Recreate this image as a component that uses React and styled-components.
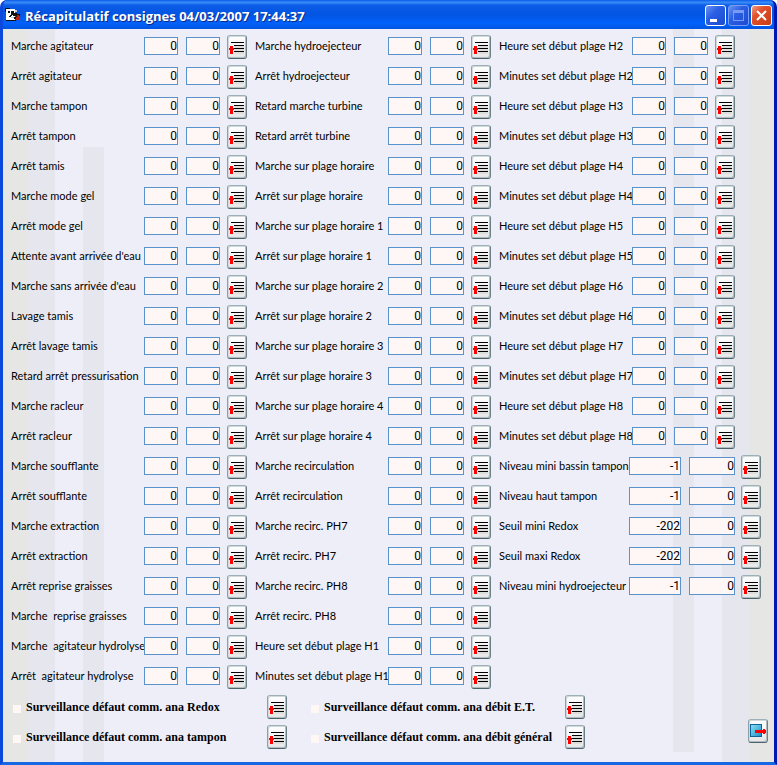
import React, { useState } from "react";
import styled, { createGlobalStyle } from "styled-components";

const GlobalStyle = createGlobalStyle`
* { box-sizing: border-box; }
html, body, #root { height: 100%; }
body {
    margin: 0;
    background: #fff;
    font-family: Lato, "Liberation Sans", sans-serif;
    font-size: 11px;
    color: #000;
}
`;

const Window = styled.div`
    display: flex;
    flex-direction: column;
    min-height: 100%;
    border: solid;
    border-width: 0 3px 3px;
    border-color: #0a49dc #0019b0 #1868e4 #0a49dc;
    border-radius: 7px 7px 0 0;
    background: #0a49dc;
    overflow: hidden;
`;

const TitleBar = styled.header`
    display: flex;
    align-items: center;
    gap: 4px;
    height: 29px;
    padding: 2px 2px 0;
    background: linear-gradient(#0a5be8 0%, #3a8cf8 8%, #0c5ce6 18%, #0254e3 50%, #0262fb 80%, #0054e0 100%);
`;

const Title = styled.h1`
    flex: 1;
    margin: 0;
    color: #fff;
    font-family: "Open Sans", "Noto Sans", sans-serif;
    font-size: 13px;
    font-weight: 700;
    line-height: 20px;
    text-shadow: 1px 1px 0 #0a2a8c;
    white-space: nowrap;
`;

const TitleButtons = styled.div`
    display: flex;
    gap: 2px;
`;

const TitleButton = styled.button`
    width: 21px;
    height: 21px;
    padding: 0;
    border: 1px solid ${(p) => (p.disabled ? "#7a9cf0" : "#fff")};
    border-radius: 3px;
    background: ${(p) => (p.$close ? "linear-gradient(135deg, #f0a088, #e0502c 35%, #c83c14)" : "linear-gradient(135deg, #6c94f4, #2a5ee4 40%, #1c4cd0)")};

    svg { display: block; }
`;

const Body = styled.main`
    flex: 1;
    display: flex;
    flex-direction: column;
    gap: 6px;
    padding: 6px 13px 13px 8px;
    background:
        linear-gradient(#e6e6ef, #e6e6ef) 80px 118px / 21px 100% no-repeat,
        linear-gradient(#e6e6ef, #e6e6ef) right 80px bottom 10px / 21px 100% no-repeat,
        linear-gradient(#e6e7e5, #e6e7e5) right / 24px 100% no-repeat,
        linear-gradient(#e6e6ef, #e6e6ef) right / 52px 100% no-repeat,
        linear-gradient(#e6e7e5, #e6e7e5) left / 25px 100% no-repeat,
        linear-gradient(#e6e6ef, #e6e6ef) left / 52px 100% no-repeat,
        #eeeef8;
`;

const Columns = styled.div`
    display: grid;
    grid-template-columns: minmax(0, 236fr) minmax(0, 236fr) minmax(0, 262fr);
    gap: 8px;
`;

const Column = styled.div`
    display: flex;
    flex-direction: column;
    gap: 6px;
`;

const Row = styled.div`
    display: flex;
    align-items: flex-start;
    height: 24px;
    padding-right: ${(p) => (p.$indent ? "26px" : "0")};
`;

const Label = styled.label`
    flex: 1;
    min-width: 0;
    line-height: 22px;
    white-space: pre;
`;

const Field = styled.input`
    flex: none;
    width: ${(p) => p.$width}px;
    height: 18px;
    margin: 2px 8px 0 0;
    padding: 0;
    border: 1px solid #5a92cc;
    border-radius: 0;
    background: #fff6f6;
    color: #000;
    font-family: Roboto, "Liberation Sans", sans-serif;
    font-size: 12px;
    line-height: 16px;
    text-align: right;
`;

const LastField = styled(Field)`
    margin-right: ${(p) => (p.$width > 34 ? "6px" : "7px")};
`;

const IconButton = styled.button`
    flex: none;
    width: 20px;
    height: 24px;
    padding: 0;
    border: 1px solid;
    border-color: #9cb0b8 #6c8088 #4c626c #8ca0a8;
    border-radius: 3px;
    background: linear-gradient(#fff, #f4f2f6 50%, #e4e6e4);
    box-shadow: inset -1px -1px 0 #b0bcc0, inset 1px 1px 0 #d0dadc;

    svg { display: block; }
`;

const Footer = styled.div`
    display: flex;
    align-items: flex-end;
    justify-content: space-between;
    margin-right: -7px;
`;

const Alarms = styled.div`
    display: grid;
    grid-template-columns: 276px 276px;
    gap: 6px 22px;
`;

const Alarm = styled.div`
    display: flex;
    align-items: center;
    height: 24px;
`;

const Check = styled.input`
    appearance: none;
    width: 8px;
    height: 8px;
    margin: 4px 5px 0 2px;
    background: #fff6f6;

    &:checked { background: #5a92cc; }
`;

const AlarmLabel = styled.label`
    flex: 1;
    font-family: "Liberation Serif", serif;
    font-size: 12px;
    font-weight: 700;
    line-height: 24px;
    white-space: nowrap;
`;

const QuitButton = styled(IconButton)`
    margin-bottom: 6px;
`;

const leftRows = [
    "Marche agitateur", "Arrêt agitateur", "Marche tampon", "Arrêt tampon",
    "Arrêt tamis", "Marche mode gel", "Arrêt mode gel",
    "Attente avant arrivée d'eau", "Marche sans arrivée d'eau",
    "Lavage tamis", "Arrêt lavage tamis", "Retard arrêt pressurisation",
    "Marche racleur", "Arrêt racleur", "Marche soufflante", "Arrêt soufflante",
    "Marche extraction", "Arrêt extraction", "Arrêt reprise graisses",
    "Marche  reprise graisses", "Marche  agitateur hydrolyse", "Arrêt  agitateur hydrolyse",
].map((label) => ({ label }));

const middleRows = [
    "Marche hydroejecteur", "Arrêt hydroejecteur", "Retard marche turbine", "Retard arrêt turbine",
    "Marche sur plage horaire", "Arrêt sur plage horaire",
    "Marche sur plage horaire 1", "Arrêt sur plage horaire 1",
    "Marche sur plage horaire 2", "Arrêt sur plage horaire 2",
    "Marche sur plage horaire 3", "Arrêt sur plage horaire 3",
    "Marche sur plage horaire 4", "Arrêt sur plage horaire 4",
    "Marche recirculation", "Arrêt recirculation",
    "Marche recirc. PH7", "Arrêt recirc. PH7", "Marche recirc. PH8", "Arrêt recirc. PH8",
    "Heure set début plage H1", "Minutes set début plage H1",
].map((label) => ({ label }));

const rightRows = [
    ...[2, 3, 4, 5, 6, 7, 8].flatMap((n) => [
        { label: `Heure set début plage H${n}`, indent: true },
        { label: `Minutes set début plage H${n}`, indent: true },
    ]),
    { label: "Niveau mini bassin tampon", value: "-1", wide: true },
    { label: "Niveau haut tampon", value: "-1", wide: true },
    { label: "Seuil mini Redox", value: "-202", wide: true },
    { label: "Seuil maxi Redox", value: "-202", wide: true },
    { label: "Niveau mini hydroejecteur", value: "-1", wide: true },
];

const columns = [leftRows, middleRows, rightRows];

const alarms = [
    "Surveillance défaut comm. ana Redox",
    "Surveillance défaut comm. ana débit E.T.",
    "Surveillance défaut comm. ana tampon",
    "Surveillance défaut comm. ana débit général",
];

const ListIcon = () => (
    <svg width="18" height="22" viewBox="0 0 18 22" shapeRendering="crispEdges">
        <path d="M7 10h9v8H7z" fill="#dcdedc" />
        <path d="M3 6h13v1H3zM6 9h10v1H6zM6 12h10v1H6zM6 15h10v1H6z" fill="#000" />
        <path d="M2 10h3v2h1v2H5v4H2v-4H1v-2h1z" fill="#f00" />
    </svg>
);

const ExitIcon = () => (
    <svg width="18" height="22" viewBox="0 0 18 22" shapeRendering="crispEdges">
        <defs>
            <linearGradient id="door" x1="0" y1="0" x2="1" y2="1">
                <stop offset="0" stopColor="#8ce4f8" />
                <stop offset="1" stopColor="#1c8cc4" />
            </linearGradient>
        </defs>
        <path d="M1.5 4.5h11v12h-11z" fill="url(#door)" stroke="#0c6498" />
        <path d="M6 10h8V9h2v1h1v3h-1v1h-2v-1H6z" fill="#f00" />
    </svg>
);

const AppIcon = () => (
    <svg width="16" height="16" viewBox="0 0 16 16" shapeRendering="crispEdges">
        <path d="M1 1h9v12H1z" fill="#fff" />
        <path d="M0 0h5v1H1v3H0zM3 3h2v2H3zM6 3h3v2h3v1h2v3h-3V8H8V7H6zM5 7h2v1H5zM4 8h2v1H4zM1 12h10v1H1zM9 9h2v2H9z" fill="#111" />
        <path d="M10 2h2v2h-2zM6 9h3v1H6z" fill="#c8c8c0" />
        <path d="M12 7h3v4h-1v1h-3V9h1z" fill="#c02010" />
        <path d="M14 6h1v2h-1z" fill="#111" />
    </svg>
);

const SettingRow = ({ id, label, value = "0", wide, indent }) => {
    const [current, setCurrent] = useState(value);
    const [target, setTarget] = useState("0");

    return (
        <Row $indent={indent}>
            <Label htmlFor={id}>{label}</Label>
            <Field id={id} $width={wide ? 52 : 34} value={current} onChange={(e) => setCurrent(e.target.value)} />
            <LastField aria-label={label} $width={wide ? 46 : 34} value={target} onChange={(e) => setTarget(e.target.value)} />
            <IconButton type="button" aria-label={`Envoyer ${label}`}><ListIcon /></IconButton>
        </Row>
    );
};

const App = () => {
    return (
        <>
            <GlobalStyle />
            <Window>
                <TitleBar>
                    <AppIcon />
                    <Title>Récapitulatif consignes 04/03/2007 17:44:37</Title>
                    <TitleButtons>
                        <TitleButton type="button" aria-label="Réduire">
                            <svg width="19" height="19"><path d="M4 13h7v3H4z" fill="#fff" /></svg>
                        </TitleButton>
                        <TitleButton type="button" aria-label="Agrandir" disabled>
                            <svg width="19" height="19"><path d="M4 4h11v11H4zM5 7v7h9V7z" fill="#7a9cf0" fillRule="evenodd" /></svg>
                        </TitleButton>
                        <TitleButton type="button" aria-label="Fermer" $close>
                            <svg width="19" height="19"><path d="M5 5l9 9M14 5l-9 9" stroke="#fff" strokeWidth="2" /></svg>
                        </TitleButton>
                    </TitleButtons>
                </TitleBar>
                <Body>
                    <Columns>
                        {columns.map((rows, c) => (
                            <Column key={c}>
                                {rows.map((row, r) => (
                                    <SettingRow key={row.label} id={`s-${c}-${r}`} {...row} />
                                ))}
                            </Column>
                        ))}
                    </Columns>
                    <Footer>
                        <Alarms>
                            {alarms.map((label, i) => (
                                <Alarm key={label}>
                                    <Check type="checkbox" id={`alarm-${i}`} />
                                    <AlarmLabel htmlFor={`alarm-${i}`}>{label}</AlarmLabel>
                                    <IconButton type="button" aria-label={`Envoyer ${label}`}><ListIcon /></IconButton>
                                </Alarm>
                            ))}
                        </Alarms>
                        <QuitButton type="button" aria-label="Quitter"><ExitIcon /></QuitButton>
                    </Footer>
                </Body>
            </Window>
        </>
    );
};

export default App;
